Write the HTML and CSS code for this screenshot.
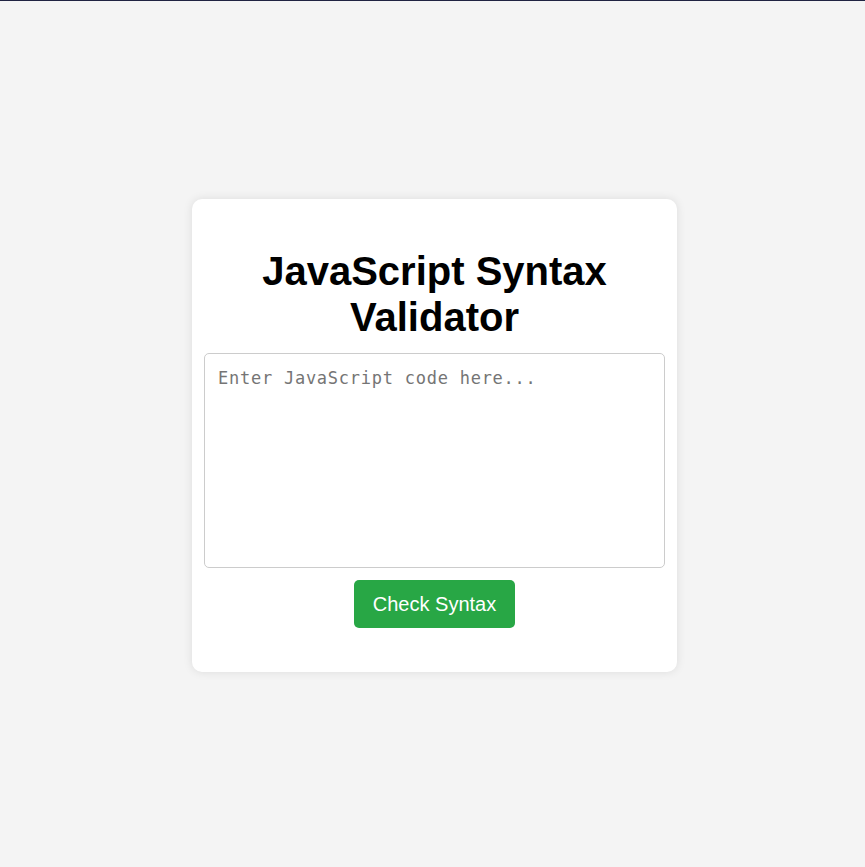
FILE: index.html
```html
<!DOCTYPE html>
<html lang="en">
<head>
<meta charset="utf-8">
<title>JavaScript Syntax Validator</title>
<link rel="stylesheet" href="styles.css">
</head>
<body>
<div class="topline"></div>
<main class="page">
  <section class="card">
    <h1 class="title">JavaScript Syntax Validator</h1>
    <textarea class="code" placeholder="Enter JavaScript code here..."></textarea>
    <button class="check" type="button">Check Syntax</button>
  </section>
</main>
</body>
</html>
```

FILE: styles.css
```css
html, body {
  margin: 0;
  padding: 0;
}
body {
  background: #f4f4f4;
  font-family: "Liberation Sans", Arial, sans-serif;
  height: 867px;
  display: flex;
  flex-direction: column;
}
.topline {
  height: 1px;
  background: #202342;
  flex: none;
}
.page {
  flex: 1;
  display: flex;
  align-items: center;
  justify-content: center;
}
.card {
  box-sizing: border-box;
  width: 485px;
  margin: 3px 0 0 4px;
  background: #ffffff;
  border-radius: 10px;
  box-shadow: 0 0 10px rgba(0, 0, 0, 0.1);
  padding: 20px 12px 44px;
  display: flex;
  flex-direction: column;
  align-items: center;
}
.title {
  font-size: 40px;
  font-weight: bold;
  line-height: 46px;
  color: #000;
  text-align: center;
  margin: 29px 0 13px;
}
.code {
  box-sizing: border-box;
  width: 461px;
  height: 215px;
  border: 1px solid #cccccc;
  border-radius: 5px;
  padding: 14px 13px;
  font-family: "DejaVu Sans Mono", monospace;
  font-size: 17px;
  letter-spacing: 0.75px;
  resize: none;
  margin: 0 0 12px;
  outline: none;
}
.code::placeholder {
  color: #757575;
}
.check {
  font-family: "Liberation Sans", Arial, sans-serif;
  font-size: 20px;
  line-height: 24px;
  padding: 12px 19px;
  background: #28a745;
  color: #ffffff;
  border: none;
  border-radius: 5px;
  cursor: pointer;
}
```
